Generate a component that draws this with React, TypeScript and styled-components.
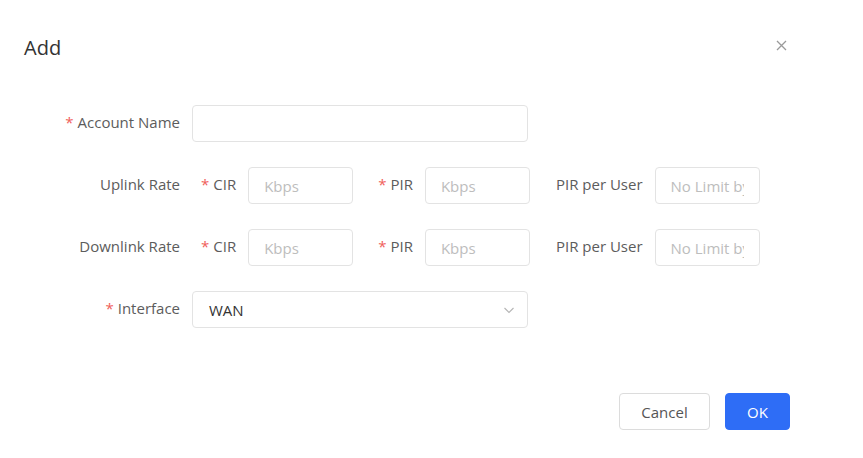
import styled, { createGlobalStyle } from 'styled-components';

const GlobalStyle = createGlobalStyle`
    html, body {
        margin: 0;
        padding: 0;
        background: #ffffff;
    }
    body {
        font-family: 'Open Sans', 'Noto Sans', 'Liberation Sans', sans-serif;
        -webkit-font-smoothing: antialiased;
    }
`;

const LABEL_COLOR = '#5c5c5c';
const BORDER_COLOR = '#e3e3e3';
const PLACEHOLDER_COLOR = '#bdbdbd';
const REQUIRED_COLOR = '#f0605a';
const PRIMARY_COLOR = '#2e6df6';

const Dialog = styled.div`
    width: 863px;
    height: 458px;
    background: #ffffff;
    box-sizing: border-box;
    display: flex;
    flex-direction: column;
`;

const Header = styled.div`
    display: flex;
    align-items: center;
    justify-content: space-between;
    padding: 36px 76px 0 24px;
    height: 24px;
`;

const Title = styled.h2`
    margin: 0;
    font-size: 20px;
    font-weight: 400;
    color: #333333;
    line-height: 24px;
`;

const CloseButton = styled.button`
    border: 0;
    background: none;
    padding: 0;
    width: 12px;
    height: 12px;
    margin-top: -6px;
    display: flex;
    align-items: center;
    justify-content: center;
    cursor: pointer;
    color: #9a9a9a;
`;

const Form = styled.form`
    display: flex;
    flex-direction: column;
    gap: 25px;
    margin-top: 45px;
    padding-left: 24px;
`;

const Row = styled.div`
    display: flex;
    align-items: center;
    height: 37px;
`;

const Label = styled.label`
    width: 156px;
    margin-right: 12px;
    margin-top: -3px;
    text-align: right;
    font-size: 15px;
    color: ${LABEL_COLOR};
    white-space: nowrap;
`;

const Required = styled.span`
    color: ${REQUIRED_COLOR};
    margin-right: 4px;
`;

const Input = styled.input<{ $width: number }>`
    width: ${(p) => p.$width}px;
    height: 37px;
    box-sizing: border-box;
    border: 1px solid ${BORDER_COLOR};
    border-radius: 4px;
    padding: 0 15px;
    font-family: inherit;
    font-size: 15px;
    color: #333333;
    outline: none;
    &::placeholder {
        color: ${PLACEHOLDER_COLOR};
    }
`;

const RateFields = styled.div`
    display: flex;
    align-items: center;
    padding-left: 9px;
`;

const RateGroup = styled.div<{ $offset: number }>`
    display: flex;
    align-items: center;
    gap: 12px;
    margin-left: ${(p) => p.$offset}px;
`;

const SubLabel = styled.span`
    font-size: 15px;
    margin-top: -3px;
    color: ${LABEL_COLOR};
    white-space: nowrap;
`;

const Select = styled.div`
    width: 336px;
    height: 37px;
    box-sizing: border-box;
    border: 1px solid ${BORDER_COLOR};
    border-radius: 4px;
    padding: 0 12px 0 16px;
    display: flex;
    align-items: center;
    justify-content: space-between;
    font-size: 15px;
    color: #333333;
`;

const Chevron = styled.svg`
    width: 12px;
    height: 12px;
    color: #b5b5b5;
`;

const Footer = styled.div`
    display: flex;
    justify-content: flex-end;
    gap: 15px;
    padding-right: 73px;
    margin-top: 65px;
`;

const Button = styled.button<{ $primary?: boolean; $width: number }>`
    width: ${(p) => p.$width}px;
    height: 37px;
    padding: 0;
    border-radius: 4px;
    font-family: inherit;
    font-size: 15px;
    cursor: pointer;
    border: 1px solid ${(p) => (p.$primary ? PRIMARY_COLOR : '#dcdcdc')};
    background: ${(p) => (p.$primary ? PRIMARY_COLOR : '#ffffff')};
    color: ${(p) => (p.$primary ? '#ffffff' : '#555555')};
`;

const rates = [
    { name: 'Uplink Rate' },
    { name: 'Downlink Rate' },
];

export default function App() {
    return (
        <>
            <GlobalStyle />
            <Dialog>
                <Header>
                    <Title>Add</Title>
                    <CloseButton type="button" aria-label="close">
                        <svg width="11" height="11" viewBox="0 0 11 11">
                            <path
                                d="M1 1L10 10M10 1L1 10"
                                stroke="currentColor"
                                strokeWidth="1.3"
                            />
                        </svg>
                    </CloseButton>
                </Header>
                <Form>
                    <Row>
                        <Label>
                            <Required>*</Required>Account Name
                        </Label>
                        <Input $width={336} />
                    </Row>
                    {rates.map((rate) => (
                        <Row key={rate.name}>
                            <Label>{rate.name}</Label>
                            <RateFields>
                                <RateGroup $offset={0}>
                                    <SubLabel>
                                        <Required>*</Required>CIR
                                    </SubLabel>
                                    <Input $width={105} placeholder="Kbps" />
                                </RateGroup>
                                <RateGroup $offset={25}>
                                    <SubLabel>
                                        <Required>*</Required>PIR
                                    </SubLabel>
                                    <Input $width={105} placeholder="Kbps" />
                                </RateGroup>
                                <RateGroup $offset={26}>
                                    <SubLabel>PIR per User</SubLabel>
                                    <Input
                                        $width={105}
                                        placeholder="No Limit by Default"
                                    />
                                </RateGroup>
                            </RateFields>
                        </Row>
                    ))}
                    <Row>
                        <Label>
                            <Required>*</Required>Interface
                        </Label>
                        <Select>
                            WAN
                            <Chevron viewBox="0 0 12 12">
                                <path
                                    d="M1.5 4L6 8.5L10.5 4"
                                    fill="none"
                                    stroke="currentColor"
                                    strokeWidth="1.1"
                                />
                            </Chevron>
                        </Select>
                    </Row>
                </Form>
                <Footer>
                    <Button type="button" $width={91}>
                        Cancel
                    </Button>
                    <Button type="button" $primary $width={65}>
                        OK
                    </Button>
                </Footer>
            </Dialog>
        </>
    );
}
